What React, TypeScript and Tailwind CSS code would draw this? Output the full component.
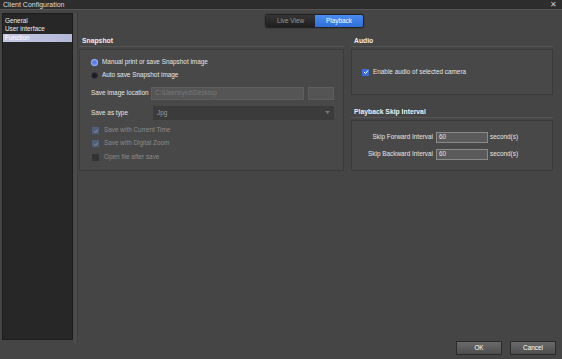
import React from "react";

function Radio({ on }: { on?: boolean }) {
  return (
    <span
      className={
        "w-[7px] h-[7px] rounded-full shrink-0 border " +
        (on ? "bg-[#5b7fe0] border-[#9fb6ff] shadow-[0_0_1px_#7f9fff]" : "bg-[#1e1a22] border-[#3a3440]")
      }
    />
  );
}

function Check({ on, dim }: { on?: boolean; dim?: boolean }) {
  return (
    <span
      className={
        "w-[7px] h-[7px] shrink-0 flex items-center justify-center " +
        (on ? (dim ? "bg-[#50607a]" : "bg-[#3b6fd8] rounded-[1px]") : "bg-[#333]")
      }
    >
      {on && (
        <svg width="6" height="6" viewBox="0 0 6 6">
          <path d="M1 3 L2.5 4.5 L5 1.5" stroke={dim ? "#8a8f98" : "#fff"} strokeWidth="1" fill="none" />
        </svg>
      )}
    </span>
  );
}

export default function App() {
  const font = "font-['Liberation_Sans',Arial,sans-serif]";
  return (
    <div className={"w-[562px] h-[359px] bg-[#454545] flex flex-col text-[6.4px] leading-none text-[#e6e6e6] " + font}>
      {/* title bar */}
      <div className="h-[10px] bg-[#2d2d2d] flex items-center justify-between px-[3px] border-b border-[#555]">
        <span className="text-[7px] text-[#ddd]">Client Configuration</span>
        <span className="text-[8px] text-[#ccc] mr-[2px]">✕</span>
      </div>

      <div className="flex flex-1 pt-[3px]">
        {/* sidebar */}
        <div className="ml-[2px] w-[71px] h-[327px] bg-[#272727] border border-[#1c1c1c] flex flex-col pt-[3px]">
          <div className="h-[8px] px-[2px] flex items-center text-[#eee]">General</div>
          <div className="h-[8px] px-[2px] flex items-center text-[#eee]">User interface</div>
          <div className="h-[8px] px-[2px] flex items-center bg-gradient-to-r from-[#c6c9e2] to-[#b4b8d8] text-white mt-[1px]">
            Function
          </div>
        </div>
        <div className="w-[5px] h-[330px] bg-[#4b4b4b] border-r border-[#3d3d3d]" />

        {/* main */}
        <div className="flex-1 flex flex-col pl-[1px] pr-[8px]">
          <div className="flex justify-center pt-[1px] ml-[-4px]">
            <div className="flex h-[14px] rounded-[3px] overflow-hidden border border-[#222] shadow-[0_0_1px_#000]">
              <div className="w-[49px] bg-gradient-to-b from-[#353535] to-[#1f1f1f] flex items-center justify-center text-[#999]">
                Live View
              </div>
              <div className="w-[48px] bg-gradient-to-b from-[#4a8cf0] to-[#2f6fd9] flex items-center justify-center text-white">
                Playback
              </div>
            </div>
          </div>

          <div className="flex gap-[7px] mt-[9px]">
            {/* snapshot */}
            <div className="w-[265px] flex flex-col">
              <div className="h-[10px] flex items-center px-[3px] font-bold text-[6.8px] text-[#f0f0f0] border-b border-[#555]">
                Snapshot
              </div>
              <div className="h-[122px] mt-[2px] border border-[#3a3a3a] bg-[#484848] flex flex-col pl-[11px] pt-[8px]">
                <div className="flex items-center gap-[4px] h-[9px]">
                  <Radio on />
                  <span>Manual print or save Snapshot image</span>
                </div>
                <div className="flex items-center gap-[4px] h-[9px] mt-[4px]">
                  <Radio />
                  <span>Auto save Snapshot image</span>
                </div>
                <div className="flex items-center h-[13px] mt-[7px]">
                  <span className="w-[60px] pl-[0px]">Save image location</span>
                  <div className="w-[153px] h-[13px] bg-[#555] border border-[#5e5e5e] text-[#7a7a7a] flex items-center px-[3px]">
                    C:\Users\yxd\Desktop
                  </div>
                  <div className="w-[26px] h-[13px] ml-[4px] bg-[#545454] border border-[#5e5e5e]" />
                </div>
                <div className="flex items-center h-[14px] mt-[6px]">
                  <span className="w-[62px]">Save as type</span>
                  <div className="w-[181px] h-[14px] bg-[#3b3b3b] text-[#9a9a9a] flex items-center justify-between px-[4px]">
                    <span>Jpg</span>
                    <svg width="5" height="4" viewBox="0 0 5 4">
                      <path d="M0 0 L5 0 L2.5 3 Z" fill="#777" />
                    </svg>
                  </div>
                </div>
                <div className="flex flex-col text-[#8a8a8a] mt-[6px] pl-[1px]">
                  <div className="flex items-center gap-[5px] h-[9px]">
                    <Check on dim />
                    <span>Save with Current Time</span>
                  </div>
                  <div className="flex items-center gap-[5px] h-[9px] mt-[4px]">
                    <Check on dim />
                    <span>Save with Digital Zoom</span>
                  </div>
                  <div className="flex items-center gap-[5px] h-[9px] mt-[5px]">
                    <Check />
                    <span>Open file after save</span>
                  </div>
                </div>
              </div>
            </div>

            {/* right column */}
            <div className="w-[202px] flex flex-col">
              <div className="h-[10px] flex items-center px-[3px] font-bold text-[6.8px] text-[#f0f0f0] border-b border-[#555]">
                Audio
              </div>
              <div className="h-[46px] mt-[2px] border border-[#3a3a3a] bg-[#484848] flex items-center pl-[10px] gap-[4px]">
                <Check on />
                <span>Enable audio of selected camera</span>
              </div>

              <div className="h-[10px] mt-[13px] flex items-center px-[3px] font-bold text-[6.8px] text-[#f0f0f0] border-b border-[#555]">
                Playback Skip Interval
              </div>
              <div className="h-[51px] mt-[2px] border border-[#3a3a3a] bg-[#484848] flex flex-col justify-center gap-[6px]">
                <div className="flex items-center h-[11px]">
                  <span className="w-[81px] text-right">Skip Forward Interval</span>
                  <div className="w-[52px] h-[11px] ml-[3px] bg-[#5a5a5a] border border-[#8a8a8a] flex items-center px-[2px]">60</div>
                  <span className="ml-[2px]">second(s)</span>
                </div>
                <div className="flex items-center h-[11px]">
                  <span className="w-[81px] text-right">Skip Backward Interval</span>
                  <div className="w-[52px] h-[11px] ml-[3px] bg-[#5a5a5a] border border-[#8a8a8a] flex items-center px-[2px]">60</div>
                  <span className="ml-[2px]">second(s)</span>
                </div>
              </div>
            </div>
          </div>

          <div className="flex-1" />
          <div className="flex justify-end gap-[8px] mb-[4px] mr-[-2px]">
            <div className="w-[46px] h-[14px] bg-gradient-to-b from-[#6a6a6a] to-[#4e4e4e] border border-[#2a2a2a] flex items-center justify-center text-white">
              OK
            </div>
            <div className="w-[46px] h-[14px] bg-gradient-to-b from-[#6a6a6a] to-[#4e4e4e] border border-[#2a2a2a] flex items-center justify-center text-white">
              Cancel
            </div>
          </div>
        </div>
      </div>
    </div>
  );
}
